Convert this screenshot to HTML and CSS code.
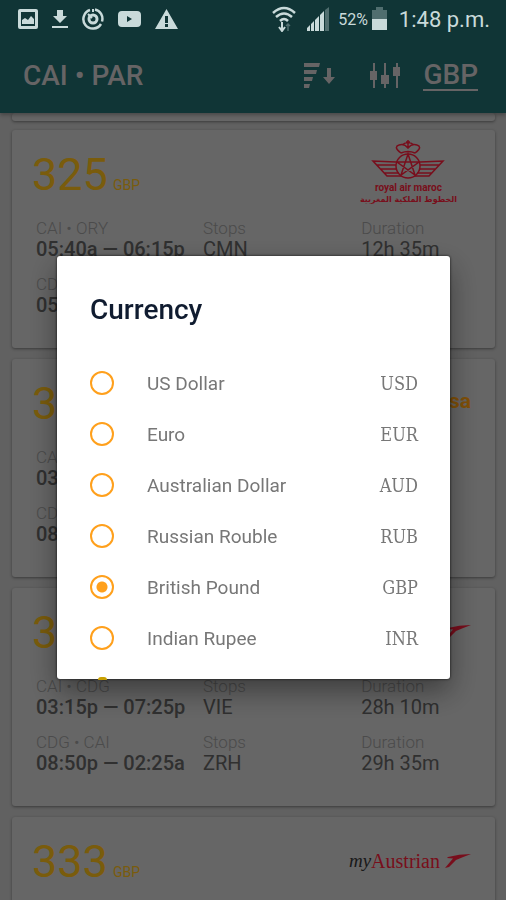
FILE: index.html
```html
<!DOCTYPE html>
<html lang="en">
<head>
<meta charset="utf-8">
<meta name="viewport" content="width=device-width, initial-scale=1">
<title>CAI • PAR flights</title>
<link rel="stylesheet" href="styles.css">
</head>
<body>
<svg class="symbols" aria-hidden="true">
  <symbol id="swoosh" viewBox="0 0 26 16">
    <path d="M0 15 L4 14 L11 7 Q18 4 26 1 Q14 1 3 4 L2 5 L8 5.500 Z"/>
  </symbol>
</svg>
<div class="app">
  <div class="status">
    <div class="status-group">
      <svg width="20" height="22" viewBox="0 0 20 22"><path fill-rule="evenodd" d="M2 1h16a2 2 0 0 1 2 2v16a2 2 0 0 1-2 2H2a2 2 0 0 1-2-2V3a2 2 0 0 1 2-2zm1 3v14h14V4z"/><path d="M4 16v-4l3-2 3 2 3-4 3 3v5z"/></svg>
      <svg width="16" height="22" viewBox="0 0 16 22"><path d="M5 2h6v6h4l-7 7-7-7h4zM0 18h16v2H0z"/></svg>
      <svg class="line" width="22" height="22" viewBox="0 0 22 22"><path d="M8 2a9.500 9.500 0 1 0 11 14M13 1.500a9.500 9.500 0 0 1 7 12" stroke-width="2.500"/><circle cx="11" cy="11" r="4" stroke-width="3"/><path d="M6 6l4 4M11 1v3" stroke-width="2"/></svg>
      <svg width="23" height="22" viewBox="0 0 23 22"><path fill-rule="evenodd" d="M4 3h15q4 0 4 4v8q0 4-4 4H4q-4 0-4-4V7q0-4 4-4zm5 5v6l5-3z"/></svg>
      <svg width="23" height="22" viewBox="0 0 23 22"><path fill-rule="evenodd" d="M11.500 1L23 21H0zM10 8v7h3V8zm0 8v3h3v-3z"/></svg>
    </div>
    <div class="status-group status-right">
      <svg class="line" width="24" height="26" viewBox="0 0 24 26"><path d="M1 7q11-10 22 0M4 11q8-7 16 0M8 15q4-4 8 0" stroke-width="2.500"/><path d="M10 16v8M7 21l3 4 3-4" stroke-width="2"/><path class="dim" d="M16 25v-7M14 20l2-2 2 2" stroke-width="1.500"/></svg>
      <svg class="signal" width="24" height="24" viewBox="0 0 24 24"><path d="M1 24v-3l3-3v6zM5 24v-7l3-3v10zM9 24V13l4-4v15zM14 24V8l4-4v20z"/><path class="dim" d="M19 24V3l4-3v24z"/></svg>
      <span class="percent">52%</span>
      <svg class="battery" width="15" height="24" viewBox="0 0 15 24"><path class="dim" d="M4 0h7v3h4v9H0V3h4z"/><path d="M0 12h15v11H0z"/></svg>
      <span class="clock">1:48 p.m.</span>
    </div>
  </div>
  <header class="bar">
    <h1>CAI • PAR</h1>
    <button type="button" class="icon sort" aria-label="Sort"><svg width="32" height="28" viewBox="0 0 32 28"><path d="M1 1h16l-1 4H1zM1 8h13l-1 4H1zM1 15h9l-1 4H1zM1 22h6l-1 4H1zM24 6h4v9h4l-6 7-6-7h4z"/></svg></button>
    <button type="button" class="icon" aria-label="Filter"><svg width="32" height="28" viewBox="0 0 32 28"><path d="M4 1h2v8h2v9H6v8H4v-8H1V9h3zM15 1h2v12h3v9h-3v4h-2v-4h-3v-9h3zM27 1h2v4h2v9h-2v12h-2V14h-3V5h3z"/></svg></button>
    <button type="button" class="currency">GBP</button>
  </header>
  <main class="list">
    <div class="card tail"></div>
    <article class="card">
      <div class="top">
        <p class="price">325 <small>GBP</small></p>
        <div class="logo maroc">
          <svg width="74" height="40" viewBox="0 0 74 40"><circle cx="37" cy="26" r="12"/><path d="M37 14l7 21-18-13h22L30 35zM30 13q7-3 14 0M30 13q-8-6-2-8 5-2 9 3 4-5 9-3 6 2-2 8M37 8V0M35 2h4M31 5q6-5 12 0M25 22L2 21l14 15h14M6 25h19M10 29h15M13 33h15M49 22l23-1-14 15H44M68 25H49M64 29H49M61 33H46"/></svg>
          <span>royal air maroc</span>
          <span class="arabic" lang="ar" dir="rtl">الخطوط الملكية المغربية</span>
        </div>
      </div>
      <dl class="legs">
        <div><dt>CAI • ORY</dt><dd class="time">05:40a — 06:15p</dd></div><div><dt>Stops</dt><dd>CMN</dd></div><div><dt>Duration</dt><dd>12h 35m</dd></div>
        <div><dt>CDG • CAI</dt><dd class="time">05:10p — 11:55p</dd></div>
      </dl>
    </article>
    <article class="card">
      <div class="top">
        <p class="price">328 <small>GBP</small></p>
        <div class="logo lufthansa">Lufthansa</div>
      </div>
      <dl class="legs">
        <div><dt>CAI • CDG</dt><dd class="time">03:15a — 09:25a</dd></div><div></div><div></div>
        <div><dt>CDG • CAI</dt><dd class="time">08:50p — 02:25a</dd></div>
      </dl>
    </article>
    <article class="card">
      <div class="top">
        <p class="price">333 <small>GBP</small></p>
        <div class="logo austrian"><svg width="26" height="16"><use href="#swoosh"/></svg></div>
      </div>
      <dl class="legs">
        <div><dt>CAI • CDG</dt><dd class="time">03:15p — 07:25p</dd></div><div><dt>Stops</dt><dd>VIE</dd></div><div><dt>Duration</dt><dd>28h 10m</dd></div>
        <div><dt>CDG • CAI</dt><dd class="time">08:50p — 02:25a</dd></div><div><dt>Stops</dt><dd>ZRH</dd></div><div><dt>Duration</dt><dd>29h 35m</dd></div>
      </dl>
    </article>
    <article class="card">
      <div class="top">
        <p class="price">333 <small>GBP</small></p>
        <div class="logo austrian"><i>my</i><span>Austrian</span><svg width="26" height="16"><use href="#swoosh"/></svg></div>
      </div>
    </article>
  </main>
</div>
<div class="scrim">
  <form class="dialog" role="dialog" aria-labelledby="dialog-title">
    <h2 id="dialog-title">Currency</h2>
    <label class="option"><input type="radio" name="currency" value="USD"><span>US Dollar</span><span class="code">USD</span></label>
    <label class="option"><input type="radio" name="currency" value="EUR"><span>Euro</span><span class="code">EUR</span></label>
    <label class="option"><input type="radio" name="currency" value="AUD"><span>Australian Dollar</span><span class="code">AUD</span></label>
    <label class="option"><input type="radio" name="currency" value="RUB"><span>Russian Rouble</span><span class="code">RUB</span></label>
    <label class="option"><input type="radio" name="currency" value="GBP" checked><span>British Pound</span><span class="code">GBP</span></label>
    <label class="option"><input type="radio" name="currency" value="INR"><span>Indian Rupee</span><span class="code">INR</span></label>
  </form>
</div>
</body>
</html>
```
FILE: styles.css
```css
* { box-sizing: border-box; margin: 0; padding: 0; }

body {
  font-family: Roboto, "Liberation Sans", sans-serif;
  background: #c2c2c2;
}

button { border: 0; background: none; font: inherit; color: inherit; }
svg { display: block; flex: none; }
.symbols { position: absolute; width: 0; height: 0; }

.app {
  display: flex;
  flex-direction: column;
  height: 100vh;
  overflow: hidden;
}

/* Status bar stays bright above the scrim */
.status {
  position: relative;
  z-index: 3;
  flex: none;
  display: flex;
  justify-content: space-between;
  align-items: center;
  height: 38px;
  padding: 0 16px 0 18px;
  background: #103536;
  color: #c9dada;
  fill: #c9dada;
}
.status-group { display: flex; align-items: center; gap: 14px; }
.status-right { gap: 4px; }
.status .line { fill: none; stroke: #c9dada; }
.status .dim { opacity: 0.35; }
.signal { margin: 0 4px 0 6px; }
.percent { font-size: 16px; }
.clock { margin-left: 8px; font-size: 22px; }

.bar {
  position: relative;
  z-index: 1;
  flex: none;
  display: flex;
  align-items: center;
  height: 75px;
  padding: 0 28px 0 23px;
  background: #206a6c;
  color: #ccc8ca;
  fill: #ccc8ca;
  box-shadow: 0 2px 4px rgba(0, 0, 0, 0.3);
}
.bar h1 { flex: 1; font-size: 28px; font-weight: 500; }
.icon { margin-right: 22px; }
.sort { margin-right: 34px; }
.currency {
  font-size: 28px;
  font-weight: 500;
  line-height: 28px;
  border-bottom: 2px solid #ccc8ca;
}

.list {
  display: flex;
  flex-direction: column;
  gap: 11px;
  padding: 0 11px 0 12px;
}
.card {
  flex: none;
  height: 218px;
  background: #cccccc;
  border-radius: 3px;
  box-shadow: 0 1px 3px rgba(0, 0, 0, 0.4);
}
.tail { height: 8px; margin-bottom: -2px; }

.top {
  display: flex;
  justify-content: space-between;
  height: 88px;
  padding: 0 24px 0 20px;
}
.price { padding-top: 18px; font-size: 45px; line-height: 54px; color: #f4b818; }
.price small { margin-left: -6px; font-size: 14px; }

.legs {
  display: grid;
  grid-template-columns: 38fr 36fr 25fr;
  row-gap: 14px;
  padding: 0 24px;
}
dt { font-size: 17px; font-weight: 300; line-height: 20px; color: #969696; }
dd { font-size: 20px; line-height: 22px; color: #606060; }
.time { font-weight: 500; }

.maroc {
  display: flex;
  flex-direction: column;
  align-items: center;
  padding: 10px 14px 0 0;
  font-size: 10px;
  font-weight: 700;
  line-height: 12px;
  color: #f01c38;
}
.maroc svg { margin-bottom: 2px; fill: none; stroke: #f01c38; stroke-width: 1.5; }
.arabic { font-family: "DejaVu Sans", sans-serif; font-size: 8px; }
.lufthansa { padding-top: 30px; font-size: 21px; font-weight: 700; line-height: 24px; color: #ffa010; }
.austrian {
  display: flex;
  align-items: center;
  height: 88px;
  font-family: "Liberation Serif", serif;
  font-size: 20px;
  color: #f01c38;
  fill: #f01c38;
}
.austrian i { font-size: 19px; color: #333; }
.austrian svg { margin-left: 5px; }

.scrim {
  position: fixed;
  inset: 0;
  z-index: 2;
  display: flex;
  align-items: center;
  padding: 34px 56px 0 57px;
  background: rgba(0, 0, 0, 0.5);
}
.dialog {
  position: relative;
  flex: 1;
  padding: 37px 32px 15px 33px;
  background: #fff;
  border-radius: 3px;
  box-shadow: 0 0 3px rgba(0, 0, 0, 0.8), 0 12px 28px rgba(0, 0, 0, 0.4);
}
/* Edge of the touch ripple below the last option */
.dialog::after {
  content: "";
  position: absolute;
  left: 41px;
  bottom: -1px;
  width: 9px;
  height: 3px;
  border-radius: 4px 4px 0 0;
  background: #c9a000;
}
.dialog h2 { margin-bottom: 31px; font-size: 28px; font-weight: 500; line-height: 34px; color: #101c30; }
.option {
  display: flex;
  align-items: center;
  height: 51px;
  font-size: 19px;
  color: #777;
}
.option input {
  appearance: none;
  width: 24px;
  height: 24px;
  margin-right: 33px;
  border: 2px solid #ffa01c;
  border-radius: 50%;
}
.option input:checked { background: radial-gradient(circle, #ffa01c 5px, transparent 6px); }
.code {
  margin-left: auto;
  font-family: "Roboto Slab", "DejaVu Serif Condensed", "DejaVu Serif", serif;
  font-size: 18px;
}
```
